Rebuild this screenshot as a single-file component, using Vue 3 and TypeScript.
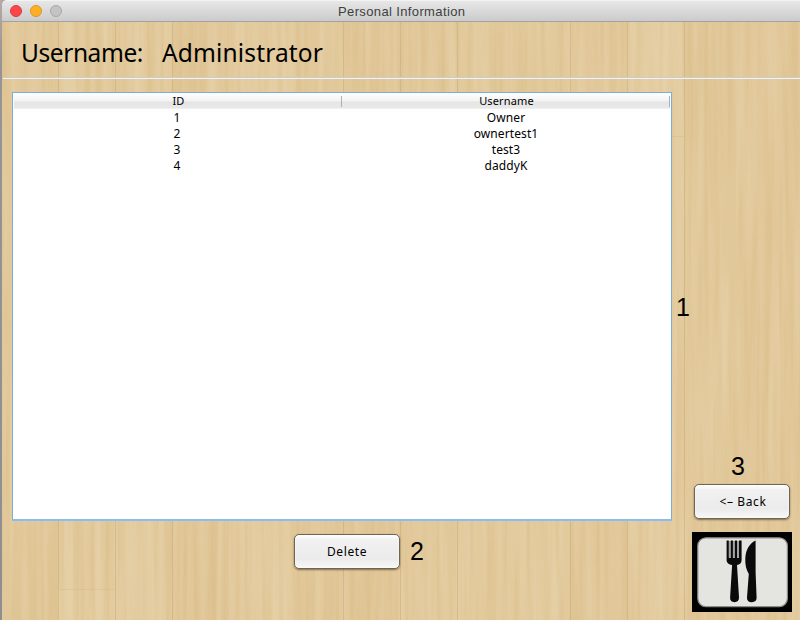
<script setup lang="ts">
interface User {
  id: number
  username: string
}
interface Plank {
  x: number
  y: number
  w: number
  h: number
  tone: string
}

const users: User[] = [
  { id: 1, username: 'Owner' },
  { id: 2, username: 'ownertest1' },
  { id: 3, username: 'test3' },
  { id: 4, username: 'daddyK' },
]

const tones = ['#e1c89a', '#e2ca9d', '#e2ca9d', '#e1c799', '#e3cb9f', '#e1c89a', '#e1c799']
const seams = [2, 58.5, 115.5, 172.5, 229, 286, 343.5, 400.5, 457.5, 514, 570.5, 627.5, 684.5, 741, 798, 855]
const planks: Plank[] = seams.slice(0, -1).map((x, i) => ({
  x,
  y: 22,
  w: seams[i + 1] - x,
  h: 598,
  tone: tones[i % tones.length],
}))
const lines = [58.5, 115.5, 172.5, 343.5, 400.5, 457.5, 570.5, 627.5, 684.5]
</script>

<template>
  <main class="window">
    <svg class="wood" viewBox="0 0 800 620" aria-hidden="true">
      <defs>
        <filter id="fine" x="0" y="0" width="100%" height="100%" color-interpolation-filters="sRGB">
          <feTurbulence type="fractalNoise" baseFrequency="0.2 0.006" numOctaves="2" seed="8" />
          <feColorMatrix values="0 0 0 0 0.83  0 0 0 0 0.69  0 0 0 0 0.45  1.7 0 0 0 -0.68" />
        </filter>
        <filter id="pale" x="0" y="0" width="100%" height="100%" color-interpolation-filters="sRGB">
          <feTurbulence type="fractalNoise" baseFrequency="0.11 0.004" numOctaves="3" seed="23" />
          <feColorMatrix values="0 0 0 0 0.92  0 0 0 0 0.85  0 0 0 0 0.71  0 2 0 0 -0.8" />
        </filter>
      </defs>
      <rect v-for="p in planks" :key="p.x" :x="p.x" :y="p.y" :width="p.w" :height="p.h" :fill="p.tone" />
      <rect x="58" y="589" width="57" height="31" fill="#e3cb9e" />
      <rect x="2" y="22" width="798" height="598" filter="url(#fine)" opacity=".42" />
      <rect x="2" y="22" width="798" height="598" filter="url(#pale)" opacity=".45" />
      <g stroke="#d6b67c" stroke-opacity=".6">
        <line v-for="x in lines" :key="x" :x1="x" y1="22" :x2="x" y2="620" />
        <path d="M59 589.5h56M672 136.5h12" stroke-opacity=".4" />
      </g>
    </svg>

    <header class="titlebar">
      <i class="light close"></i>
      <i class="light minimise"></i>
      <i class="light disabled"></i>
      <span class="title">Personal Information</span>
    </header>

    <section class="identity">
      <span class="label">Username:</span>
      <span class="value">Administrator</span>
    </section>
    <div class="rule"></div>

    <section class="content">
      <div class="left">
        <div class="table">
          <div class="row head">
            <span>ID</span>
            <span>Username</span>
          </div>
          <div v-for="u in users" :key="u.id" class="row">
            <span class="num">{{ u.id }}</span>
            <span class="name">{{ u.username }}</span>
          </div>
        </div>
        <button class="btn delete">Delete</button>
      </div>
      <aside class="right">
        <button class="btn back">&lt;– Back</button>
        <svg class="logo" viewBox="0 0 100 80" role="img">
          <rect width="100" height="80" fill="#000" />
          <rect x="5.8" y="5.8" width="89.6" height="68.8" rx="8" fill="#e4e5e1" stroke="#8b8b88" stroke-width="1.2" />
          <g fill="#0a0a0a">
            <path d="M34.6 8.5h2.2v17.2h2V8.5h2.1v17.2h2V8.5h2.1v17.2h2V8.5h2.6V28c0 3-1.8 4.6-4.6 5.1l2 32.5c.1 3-1.6 4.6-4.4 4.6-3 0-4.7-1.6-4.5-4.6l2-32.5c-3.1-.5-5.5-2.1-5.5-5.1z" />
            <path d="M36.8 9h2v16h-2zM40.9 9h2v16h-2zM45 9h2v16h-2z" opacity=".3" />
            <path d="M63.6 8.6v32l1 25c.1 3.1-1.6 4.6-4.8 4.6s-5-1.6-4.8-4.7l1.8-23.5C54.4 38 53 32.9 53.3 26.5 53.8 18.2 57 11.8 63.6 8.6z" />
          </g>
        </svg>
      </aside>
    </section>

    <span class="callout one">1</span>
    <span class="callout two">2</span>
    <span class="callout three">3</span>
  </main>
</template>

<style>
body {
  margin: 0;
  overflow: hidden;
}
</style>

<style scoped>
.window {
  position: relative;
  display: flex;
  flex-direction: column;
  box-sizing: border-box;
  width: 800px;
  height: 620px;
  padding-left: 2px;
  overflow: hidden;
  background: linear-gradient(#b5aaa6, #969494 60px, #8e8e8e);
  color: #000;
  font-family: "Noto Sans", "DejaVu Sans", sans-serif;
}
.wood {
  position: absolute;
  left: 0;
  top: 0;
  width: 800px;
  height: 620px;
}
.titlebar {
  position: relative;
  display: flex;
  align-items: center;
  gap: 8px;
  box-sizing: border-box;
  flex: none;
  height: 22px;
  padding-left: 8px;
  border-top: 1px solid #f3f3f3;
  border-bottom: 1px solid #a3a3a3;
  border-radius: 5px 0 0 0;
  background: linear-gradient(#e7e7e7, #cbcbcb);
}
.light {
  box-sizing: border-box;
  width: 12px;
  height: 12px;
  border: 1px solid;
  border-radius: 50%;
}
.close {
  background: #fb4749;
  border-color: #df3a3e;
}
.minimise {
  background: #fdb026;
  border-color: #df9423;
}
.disabled {
  background: #c3c3c3;
  border-color: #a9a9a9;
}
.title {
  margin-left: 268px;
  padding-top: 2px;
  color: #404040;
  font: 13px/18px "Liberation Sans", Arial, sans-serif;
  letter-spacing: 0.37px;
  white-space: nowrap;
}
.identity {
  position: relative;
  display: flex;
  flex: none;
  gap: 19px;
  height: 55px;
  padding-left: 19px;
  font-size: 24.5px;
  line-height: 61px;
  white-space: nowrap;
}
.label {
  width: 122px;
  letter-spacing: -0.42px;
}
.value {
  letter-spacing: 0.15px;
}
.rule {
  position: relative;
  flex: none;
  height: 1px;
  margin-left: 1px;
  border-bottom: 1px solid #f1f2f2;
  background: #c9ccce;
}
.content {
  position: relative;
  display: flex;
  flex: 1;
  gap: 20px;
  padding: 13px 8px 8px 10px;
}
.left {
  display: flex;
  flex-direction: column;
  width: 660px;
}
.table {
  box-sizing: border-box;
  height: 429px;
  border: 1px solid #79aedb;
  border-bottom: 2px solid #8abdf0;
  background: #fff;
  font-size: 12px;
}
.row {
  display: grid;
  grid-template-columns: 329px 329px;
  height: 16px;
  line-height: 16px;
  text-align: center;
}
.name {
  padding-right: 1px;
  letter-spacing: 0.1px;
}
.row.head {
  margin: 0 1px 1px;
  grid-template-columns: 328px 328px;
  background: linear-gradient(#fff, #f3f3f3 8px, #e5e5e5 9px, #e9e9e9 15px, #f5f5f5);
  font-size: 11px;
}
.head span {
  height: 11px;
  margin-top: 3px;
  border-right: 1px solid #b0b0b0;
  line-height: 9px;
  letter-spacing: 0.15px;
}
.head span:first-child,
.head span:last-child {
  padding-left: 2px;
}
.num {
  padding-right: 1px;
}
.btn {
  box-sizing: border-box;
  height: 35px;
  padding: 0;
  border: 1px solid #6f6555;
  border-radius: 5px;
  background: linear-gradient(#fff, #f1f1f1 5px, #ebebeb 24px, #f8f8f8);
  box-shadow: 0 1px 2px rgba(75, 58, 30, 0.65), inset 0 0 2px #fff;
  color: #000;
  font: 12px/16px "Noto Sans", "DejaVu Sans", sans-serif;
  letter-spacing: 0.6px;
}
.delete {
  width: 106px;
  margin: 13px 0 0 282px;
}
.right {
  display: flex;
  flex-direction: column;
  justify-content: flex-end;
  width: 100px;
}
.back {
  width: 96px;
  margin: 0 2px 13px;
  padding-left: 2px;
}
.logo {
  display: block;
  width: 100px;
  height: 80px;
}
.callout {
  position: absolute;
  font: 25px/28px "Liberation Sans", Arial, sans-serif;
}
.one {
  left: 676px;
  top: 293px;
}
.two {
  left: 410px;
  top: 537px;
}
.three {
  left: 731px;
  top: 452px;
}
</style>
